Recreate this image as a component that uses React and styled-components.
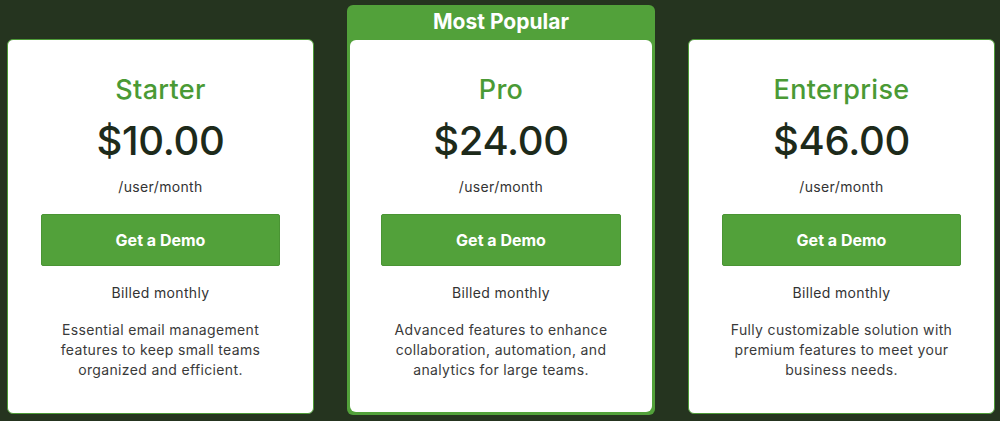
import React from 'react';
import styled, { createGlobalStyle } from 'styled-components';

const GlobalStyle = createGlobalStyle`
    body {
        margin: 0;
        background-color: #25341f;
        font-family: Inter, "Noto Sans", sans-serif;
    }
`

const Row = styled.div`
    display: grid;
    grid-template-columns: 307px 308px 307px;
    column-gap: 33px;
    align-items: end;
    padding: 5px 5px 6px 7px;
`

const Card = styled.div`
    display: flex;
    flex-direction: column;
    align-items: center;
    height: ${props => props.$inner ? '372px' : '375px'};
    margin-bottom: ${props => props.$inner ? '0' : '1px'};
    padding: 34px ${props => props.$inner ? '31px' : '33px'} 0;
    box-sizing: border-box;
    background-color: #ffffff;
    border: ${props => props.$inner ? 'none' : '1px solid #4d9a37'};
    border-radius: 6px;
    text-align: center;
`

const PopularWrapper = styled.div`
    display: flex;
    flex-direction: column;
    height: 410px;
    padding: 0 3px 3px;
    box-sizing: border-box;
    background-color: #52a13a;
    border-radius: 6px;
`

const PopularLabel = styled.div`
    height: 35px;
    line-height: 33px;
    color: #ffffff;
    font-size: 21px;
    font-weight: 700;
    text-align: center;
`

const PlanName = styled.h2`
    margin: 0;
    font-size: 27px;
    line-height: 32px;
    font-weight: 500;
    color: #4a9a35;
    letter-spacing: 0.3px;
`

const Price = styled.p`
    margin: 11px 0 0;
    font-size: 40px;
    line-height: 48px;
    font-weight: 500;
    color: #1d2a1a;
    letter-spacing: -0.3px;
`

const Unit = styled.p`
    margin: 12px 0 0;
    font-size: 14px;
    line-height: 20px;
    color: #333333;
    letter-spacing: 0.35px;
`

const DemoBtn = styled.button`
    width: 100%;
    height: 52px;
    margin-top: 17px;
    border: 1px solid #4a9434;
    border-radius: 2px;
    background-color: #52a13a;
    color: #ffffff;
    font-family: inherit;
    font-size: 16px;
    font-weight: 700;
    &:hover{
        cursor: pointer;
    }
`

const Billing = styled(Unit)`
    margin-top: 17px;
`

const Description = styled.p`
    max-width: 236px;
    margin: 17px 0 0;
    font-size: 14px;
    line-height: 20px;
    color: #3a3a3a;
    letter-spacing: 0.35px;
`

const plans = [
    {
        name: 'Starter',
        price: '$10.00',
        text: 'Essential email management features to keep small teams organized and efficient.',
    },
    {
        name: 'Pro',
        price: '$24.00',
        text: 'Advanced features to enhance collaboration, automation, and analytics for large teams.',
        popular: true,
    },
    {
        name: 'Enterprise',
        price: '$46.00',
        text: 'Fully customizable solution with premium features to meet your business needs.',
    },
]

function PlanCard({ plan, inner }) {
    return (
        <Card $inner={inner}>
            <PlanName>{plan.name}</PlanName>
            <Price>{plan.price}</Price>
            <Unit>/user/month</Unit>
            <DemoBtn>Get a Demo</DemoBtn>
            <Billing>Billed monthly</Billing>
            <Description>{plan.text}</Description>
        </Card>
    )
}

function App() {
    return (
        <>
        <GlobalStyle/>
        <Row>
            {plans.map(plan => plan.popular ? (
                <PopularWrapper key={plan.name}>
                    <PopularLabel>Most Popular</PopularLabel>
                    <PlanCard plan={plan} inner/>
                </PopularWrapper>
            ) : (
                <PlanCard key={plan.name} plan={plan}/>
            ))}
        </Row>
        </>
    )
}

export default App;
